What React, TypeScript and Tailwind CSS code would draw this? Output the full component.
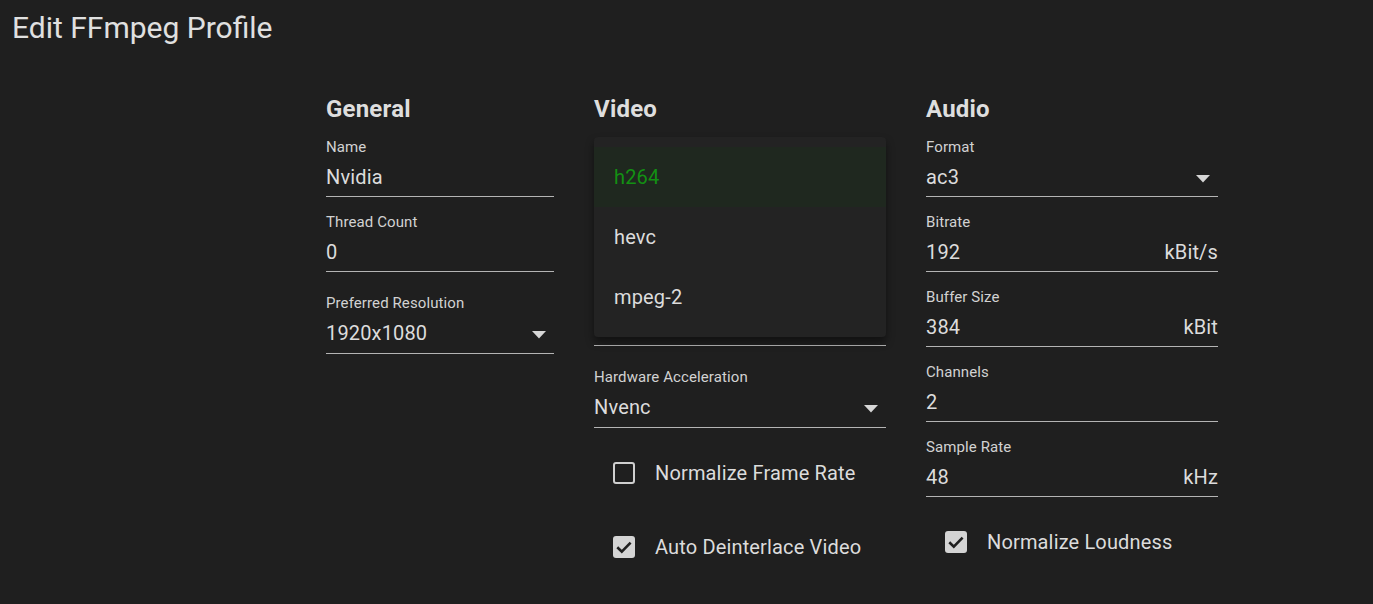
import React from "react";

const Arrow = () => (
  <svg width="14" height="8" viewBox="0 0 14 8" className="shrink-0 mr-[8px] mt-[3px]">
    <path d="M0 0 L14 0 L7 7.5 Z" fill="#d6d6d6" />
  </svg>
);

type FieldProps = {
  label: string;
  value: string;
  suffix?: string;
  select?: boolean;
  shift?: boolean;
};

const Field = ({ label, value, suffix, select, shift }: FieldProps) => (
  <div className={shift ? "flex flex-col mt-[6px]" : "flex flex-col"}>
    <div className="h-4 text-[15px] leading-4 tracking-[0.1px] text-[#d2d2d2]">{label}</div>
    <div className="mt-[10px] h-6 flex items-center justify-between text-[20px] leading-6 tracking-[0.15px] text-[#dcdcdc]">
      <span>{value}</span>
      {suffix ? <span>{suffix}</span> : null}
      {select ? <Arrow /> : null}
    </div>
    <div className={shift ? "mt-[8px] h-px bg-[#b4b4b4]" : "mt-[7px] h-px bg-[#b4b4b4]"} />
  </div>
);

const Check = ({ checked, label }: { checked: boolean; label: string }) => (
  <div className="h-[54px] flex items-center pl-[19px]">
    {checked ? (
      <svg width="22" height="22" viewBox="0 0 22 22" className="shrink-0">
        <rect x="0" y="0" width="22" height="22" rx="3" fill="#d4d4d4" />
        <path d="M4.3 11.2 L8.8 15.6 L17.6 6.6" fill="none" stroke="#1f1f1f" strokeWidth="2.6" />
      </svg>
    ) : (
      <div className="w-[22px] h-[22px] shrink-0 rounded-[3px] border-2 border-[#cfcfcf]" />
    )}
    <span className="ml-[20px] text-[20px] leading-6 tracking-[0.15px] text-[#dcdcdc]">{label}</span>
  </div>
);

const Heading = ({ children }: { children: React.ReactNode }) => (
  <div className="h-8 text-[24px] leading-8 font-bold tracking-[0.2px] text-[#dedede]">{children}</div>
);

export default function App() {
  return (
    <div
      className="w-full min-h-screen bg-[#1f1f1f] pb-10"
      style={{ fontFamily: "Roboto, 'Noto Sans', sans-serif" }}
    >
      <div className="pt-[10px] pl-[12px] text-[30px] leading-[36px] text-[#e0e0e0]">
        Edit FFmpeg Profile
      </div>
      <div className="mt-[47px] ml-[326px] flex gap-10">
        <div className="w-[228px] flex flex-col">
          <Heading>General</Heading>
          <div className="mt-[14px] flex flex-col gap-[17px]">
            <Field label="Name" value="Nvidia" />
            <Field label="Thread Count" value="0" />
            <Field label="Preferred Resolution" value="1920x1080" select shift />
          </div>
        </div>

        <div className="w-[292px] flex flex-col">
          <Heading>Video</Heading>
          <div className="relative h-[221px] flex flex-col justify-end">
            <div className="h-px bg-[#b4b4b4]" />
            <div className="absolute left-0 right-0 top-[12px] h-[200px] py-[10px] bg-[#232323] rounded-[4px] shadow-[0_5px_8px_rgba(0,0,0,0.45)]">
              <div className="h-[60px] flex items-center pl-[20px] bg-[#1f281f] text-[20px] tracking-[0.15px] text-[#139013]">
                h264
              </div>
              <div className="h-[60px] flex items-center pl-[20px] text-[20px] tracking-[0.15px] text-[#dcdcdc]">
                hevc
              </div>
              <div className="h-[60px] flex items-center pl-[20px] text-[20px] tracking-[0.15px] text-[#dcdcdc]">
                mpeg-2
              </div>
            </div>
          </div>
          <div className="mt-[17px] flex flex-col">
            <Field label="Hardware Acceleration" value="Nvenc" select shift />
          </div>
          <div className="mt-[18px] flex flex-col gap-[20px]">
            <Check checked={false} label="Normalize Frame Rate" />
            <Check checked label="Auto Deinterlace Video" />
          </div>
        </div>

        <div className="w-[292px] flex flex-col">
          <Heading>Audio</Heading>
          <div className="mt-[14px] flex flex-col gap-[17px]">
            <Field label="Format" value="ac3" select />
            <Field label="Bitrate" value="192" suffix="kBit/s" />
            <Field label="Buffer Size" value="384" suffix="kBit" />
            <Field label="Channels" value="2" />
            <Field label="Sample Rate" value="48" suffix="kHz" />
          </div>
          <div className="mt-[18px] flex flex-col">
            <Check checked label="Normalize Loudness" />
          </div>
        </div>
      </div>
    </div>
  );
}
